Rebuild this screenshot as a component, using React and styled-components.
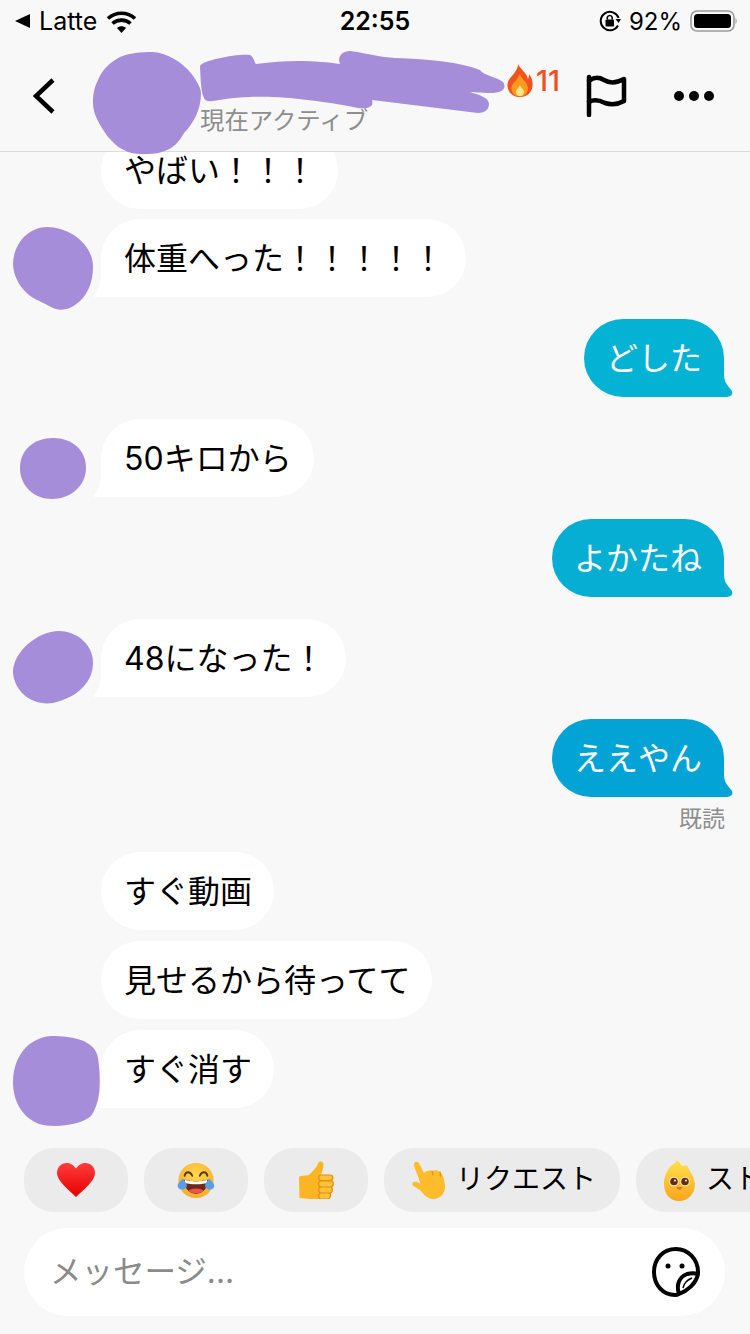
import styled, { createGlobalStyle } from "styled-components";

const Global = createGlobalStyle`
    html, body {
        margin: 0;
        padding: 0;
        background: #f8f8f8;
    }
    * {
        box-sizing: border-box;
    }
`

const JP = `Inter, "Noto Sans CJK JP", sans-serif`;
const PURPLE = "#a58dd9";

const Screen = styled.div`
    width: 750px;
    height: 1334px;
    display: flex;
    flex-direction: column;
    overflow: hidden;
    background: #f8f8f8;
    font-family: ${JP};
    color: #000;
`

const StatusBar = styled.div`
    height: 44px;
    flex: none;
    display: grid;
    grid-template-columns: 1fr auto 1fr;
    align-items: center;
    padding: 0 13px 2px 13px;
    font-size: 25px;
`

const StatusLeft = styled.div`
    display: flex;
    align-items: center;
    gap: 9px;
    padding-left: 2px;
`

const StatusRight = styled.div`
    display: flex;
    align-items: center;
    justify-content: flex-end;
    gap: 8px;
    font-size: 24px;
`

const Time = styled.div`
    font-weight: 600;
`

const Header = styled.header`
    height: 108px;
    flex: none;
    display: flex;
    align-items: center;
    padding: 0 33px 4px 33px;
    border-bottom: 1px solid #dcdcdc;
    position: relative;
    z-index: 2;
`

const AvatarSlot = styled.div`
    width: 144px;
    height: 100%;
    flex: none;
    position: relative;
`

const TitleBlock = styled.div`
    width: 302px;
    align-self: stretch;
    flex: none;
    position: relative;
    display: flex;
    align-items: flex-end;
`

const Subtitle = styled.div`
    font-size: 24.4px;
    line-height: 30px;
    color: #8e8e8e;
    margin-bottom: 12px;
`

const Streak = styled.div`
    display: flex;
    align-items: center;
    gap: 3px;
    margin: -30px auto 0 5px;
    color: #f2501e;
    font-size: 29px;
    font-weight: 500;
`

const Scribble = styled.svg`
    position: absolute;
    left: ${({ $left }) => $left}px;
    top: ${({ $top }) => $top}px;
    z-index: 1;
`

const Chat = styled.main`
    flex: 1;
    min-height: 0;
    overflow: hidden;
    display: flex;
    flex-direction: column;
`

const Row = styled.div`
    display: flex;
    justify-content: ${({ $out }) => ($out ? "flex-end" : "flex-start")};
    position: relative;
    margin-top: ${({ $gap }) => $gap}px;
    padding: ${({ $out }) => ($out ? "0 26px 0 0" : "0 0 0 101px")};
`

const Bubble = styled.div`
    position: relative;
    isolation: isolate;
    height: 78px;
    padding: ${({ $bg }) => ($bg ? "0 22px 5px" : "0 22px 5px 23px")};
    display: flex;
    align-items: center;
    border-radius: 39px;
    font-size: 32px;
    white-space: nowrap;
    background: ${({ $bg }) => $bg || "#fff"};
    color: ${({ $bg }) => ($bg ? "#fff" : "#000")};

    ${({ $tail }) => $tail && `
    &::before {
        content: "";
        position: absolute;
        z-index: -1;
        left: -8px;
        bottom: 0;
        width: 47px;
        height: 39px;
        background: #fff;
        clip-path: path("M8 0 L8 16 C8 24 6 32 1 36.5 Q0 39 3 39 L47 39 L47 0 Z");
    }
    `}

    ${({ $bg }) => $bg && `
    &::after {
        content: "";
        position: absolute;
        z-index: -1;
        right: -9px;
        bottom: 0;
        width: 48px;
        height: 39px;
        background: ${$bg};
        clip-path: path("M39 0 L39 15 C39 21 40 24 43 28 L47 33 Q49 38 42 39 L0 39 L0 0 Z");
    }
    `}
`

const Seen = styled.div`
    align-self: flex-end;
    margin: 8px 25px 0 0;
    font-size: 23px;
    line-height: 28px;
    color: #8e8e8e;
`

const Chips = styled.div`
    display: flex;
    flex: none;
    gap: 16px;
    padding-left: 24px;
    overflow: hidden;
`

const Chip = styled.div`
    flex: none;
    height: 64px;
    min-width: 104px;
    display: flex;
    align-items: center;
    justify-content: center;
    gap: 10px;
    padding: ${({ $label }) => ($label ? "0 24px 0 28px" : "0")};
    background: #ebebeb;
    border-radius: 30px;
    font-size: 28px;
    white-space: nowrap;
`

const ChipText = styled.span`
    margin-top: -7px;
`

const InputBar = styled.div`
    flex: none;
    height: 88px;
    margin: 16px 25px 18px 24px;
    display: flex;
    align-items: center;
    justify-content: space-between;
    padding: 0 25px 0 26px;
    background: #fff;
    border-radius: 44px;
`

const Placeholder = styled.div`
    font-size: 31.5px;
    color: #8a8a8a;
    margin-top: -6px;
`

const Blob = ({ d, left, top, w, h }) => (
    <Scribble $left={left} $top={top} width={w} height={h} viewBox={`0 0 ${w} ${h}`}>
        <path d={d} fill={PURPLE} />
    </Scribble>
);

const Wifi = () => (
    <svg width="31" height="23" viewBox="0 0 31 23">
        <path d="M15.5 23 L11 18 C13.5 15.8 17.5 15.8 20 18 Z" fill="#000" />
        <path d="M6.5 13.5 C11.5 9 19.5 9 24.5 13.5" fill="none" stroke="#000" strokeWidth="3.6" />
        <path d="M2 8.5 C9.5 1.5 21.5 1.5 29 8.5" fill="none" stroke="#000" strokeWidth="3.6" />
    </svg>
);

const RotationLock = () => (
    <svg width="22" height="22" viewBox="0 0 22 22">
        <path d="M19 15.5 A9.2 9.2 0 1 1 19.6 8" fill="none" stroke="#000" strokeWidth="2" />
        <path d="M16.5 9 L22 9 L19.6 13 Z" fill="#000" />
        <rect x="6.5" y="9.5" width="8.5" height="7" rx="1" fill="#000" />
        <path d="M8.3 9.5 V7.5 A2.5 2.5 0 0 1 13.2 7.5 V9.5" fill="none" stroke="#000" strokeWidth="1.6" />
    </svg>
);

const Battery = () => (
    <svg width="47" height="22" viewBox="0 0 47 22">
        <rect x="1" y="1" width="43" height="20" rx="6" fill="none" stroke="#9a9a9a" strokeWidth="1.6" />
        <rect x="4" y="4" width="37" height="14" rx="3.5" fill="#000" />
        <path d="M45.5 8 C47 8.5 47 13.5 45.5 14 Z" fill="#9a9a9a" />
    </svg>
);

const Fire = () => (
    <svg width="26" height="33" viewBox="0 0 26 33">
        <path d="M11 0 C13 5 20 9 21 15 C22 13 22 11 22 10 C25 14 26 18 25.500 22 C25 28.500 20 33 13 33 C6 33 1 28.500 .5 22 C0 15 6 12 8 8 C10 5 11 3 11 0 Z" fill="#f4511e" />
        <path d="M13 10 C14 15 21 18 21 24 C21 29 17 32.500 13 32.500 C8 32.500 4.500 29 4.500 24 C4.500 19 11 16 13 10 Z" fill="#fb9a1c" />
        <path d="M13 21 C14 24 17 25.500 17 28 C17 30.500 15 32 13 32 C10.500 32 9 30.500 9 28 C9 25.500 12 24 13 21 Z" fill="#fde58a" />
    </svg>
);

const Flag = () => (
    <svg width="42" height="43" viewBox="0 0 42 43" fill="none" stroke="#000" strokeWidth="4.5" strokeLinejoin="round" strokeLinecap="round" style={{ flex: "none" }}>
        <path d="M4 3 V41" />
        <path d="M4 7 C8 3 14 3 19 6 C24 9 30 10 39 5 V27 C32 31 26 31 20 29 C14 26 9 25 4 28" />
    </svg>
);

const Heart = () => (
    <svg width="40" height="34" viewBox="0 0 40 34">
        <defs>
            <linearGradient id="heart" x1="0" y1="0" x2="0" y2="1">
                <stop offset="0" stopColor="#ff3b3b" />
                <stop offset="1" stopColor="#e60000" />
            </linearGradient>
        </defs>
        <path d="M20 34 C13 27 1 18 1 10 C1 4 5.500 0 10.500 0 C15 0 18 2.500 20 5.500 C22 2.500 25 0 29.500 0 C34.500 0 39 4 39 10 C39 18 27 27 20 34 Z" fill="url(#heart)" />
    </svg>
);

const Laugh = () => (
    <svg width="38" height="37" viewBox="0 0 40 38">
        <defs>
            <radialGradient id="face" cx=".5" cy=".35" r=".7">
                <stop offset="0" stopColor="#ffd84f" />
                <stop offset="1" stopColor="#f9a825" />
            </radialGradient>
        </defs>
        <circle cx="20" cy="19" r="18.500" fill="url(#face)" />
        <path d="M8 14 C9 9 14 9 16 14 M24 14 C26 9 31 9 32 14" fill="none" stroke="#5a3a1a" strokeWidth="2" strokeLinecap="round" />
        <path d="M7 18 C14 20.500 26 20.500 33 18 C33 27 27 33 20 33 C13 33 7 27 7 18 Z" fill="#6d2a1a" />
        <path d="M8 18.300 C14 20.500 26 20.500 32 18.300 L31.500 21.500 C25 23.500 15 23.500 8.500 21.500 Z" fill="#fff" />
        <path d="M12 30 C15 26.500 25 26.500 28 30 C25 33 15 33 12 30 Z" fill="#ef5350" />
        <path d="M6 17 C9 21 12 24 9.500 27 C7.500 29.500 2 29 .8 25.500 C0 22.500 4 20 6 17 Z" fill="#5a9de8" />
        <path d="M34 17 C31 21 28 24 30.500 27 C32.500 29.500 38 29 39.200 25.500 C40 22.500 36 20 34 17 Z" fill="#5a9de8" />
    </svg>
);

const Thumb = () => (
    <svg width="36" height="38" viewBox="0 0 36 38">
        <path d="M1 17 C1 15.500 2 15 3.500 15 L11 14 C15 10 19 6 20 2.500 C21 -.5 25.500 0 25.500 3.500 C25.500 7 24 11 23 14 L32 14 C35.500 14 36 18 34.500 19.500 C36 21 36 25 34 26 C35.500 28 35 31 33 32 C34 35 32 38 29 38 L12 38 C8 38 5 37 1.500 37 Z" fill="#fbb424" />
        <path d="M23 14 H32 C35.500 14 36 19 32 19.500 H23 C20 19.500 20 14 23 14 Z M23 20 H33 C36 20 36 25.500 33 26 H23 C20 26 20 20 23 20 Z M23 26 H32 C35 26 35 32 32 32 H23 C20 32 20 26 23 26 Z M23 32 H30 C34 32 33 38 29 38 H23 C20 38 20 32 23 32 Z" fill="#fdc13a" stroke="#e98d0f" strokeWidth="1.200" />
    </svg>
);

const Pointing = () => (
    <svg width="34" height="38" viewBox="0 0 34 38">
        <path d="M2 4 C2 0 6 0 7.500 3 L12 12 C14 10 17 9 20 10 C23 8.500 26 9 28 11 C31 13 33 20 33 26 C33 33 28 38 21 38 C16 38 12 34 9.500 30.500 C6 27 2 26 .5 24 C-.5 21 3 20 5 21 L8.500 23 C7 16 3 10 2 4 Z" fill="#fcbc2c" />
        <path d="M20 10 L21 14 M28 11 L28.500 15" fill="none" stroke="#e98d0f" strokeWidth="1.200" strokeLinecap="round" />
    </svg>
);

const Mascot = () => (
    <svg width="32" height="41" viewBox="0 0 32 41">
        <defs>
            <linearGradient id="mascot" x1="0" y1="0" x2="0" y2="1">
                <stop offset="0" stopColor="#ffe24a" />
                <stop offset="1" stopColor="#f9a51c" />
            </linearGradient>
        </defs>
        <path d="M13 0 C15 2 17 4 18 6 C20 6 22 5 23 5 C23 8 30 14 31 24 C31 34 24 41 15 41 C6 41 0 34 0 24 C0 15 4 9 7 6 C9 4 12 3 13 0 Z" fill="url(#mascot)" />
        <circle cx="10" cy="21.500" r="4.800" fill="#fff4c0" />
        <circle cx="21" cy="21.500" r="4.800" fill="#fff4c0" />
        <circle cx="10" cy="21.500" r="3.800" fill="#6b2a12" />
        <circle cx="21" cy="21.500" r="3.800" fill="#6b2a12" />
        <circle cx="11" cy="20.500" r="1" fill="#fff" />
        <circle cx="22" cy="20.500" r="1" fill="#fff" />
        <path d="M12.500 27 H18.500 C18.500 29 16.500 30 15.500 30 C14.500 30 12.500 29 12.500 27 Z" fill="#f0703a" />
    </svg>
);

const StickerFace = () => (
    <svg width="48" height="50" viewBox="0 0 48 50" fill="none" stroke="#000" strokeWidth="4" strokeLinejoin="round" style={{ flex: "none" }}>
        <path d="M27 47 C25.500 47.800 24.500 48 23 48 C11 48 2 38 2 25 C2 12 11 2 24 2 C36 2 46 12 46 25 C46 26 46 26.500 46 27 C44 37 35 44 27 47 Z" />
        <path d="M27 47 C24 38 27 30 35 27 C39 26 43 26 46 27" />
        <path d="M31 41 C32 36 35 33 40 31" strokeWidth="1.500" />
        <circle cx="16" cy="19" r="2.500" fill="#000" stroke="none" />
        <circle cx="30" cy="19" r="2.500" fill="#000" stroke="none" />
    </svg>
);

const Blue1 = "#04b2d3";
const Blue2 = "#06aed4";
const Blue3 = "#04a3d6";

const App = () => {
    return (
        <Screen>
            <Global />
            <StatusBar>
                <StatusLeft>
                    <svg width="15" height="14" viewBox="0 0 15 14"><path d="M15 0 V14 L0 7 Z" fill="#000" /></svg>
                    <span>Latte</span>
                    <Wifi />
                </StatusLeft>
                <Time>22:55</Time>
                <StatusRight>
                    <RotationLock />
                    <span>92%</span>
                    <Battery />
                </StatusRight>
            </StatusBar>

            <Header>
                <svg width="23" height="36" viewBox="0 0 23 36" style={{ flex: "none" }}>
                    <path d="M20 2 L3 18 L20 34" fill="none" stroke="#000" strokeWidth="4.5" />
                </svg>
                <AvatarSlot>
                    <Blob
                        left={37}
                        top={8}
                        w={110}
                        h={104}
                        d="M60 0 C75 1 88 10 97 20 C105 30 108 37 108 41 C108 58 100 72 91 81 C86 90 80 96 74 98 C66 102 58 102 50 102 C42 102 36 101 31 98 C24 95 20 90 15 85 C6 72 0 62 0 51 C0 42 1 36 5 28 C10 16 18 10 27 5 C36 1 48 0 60 0 Z"
                    />
                </AvatarSlot>
                <TitleBlock>
                    <Subtitle>現在アクティブ</Subtitle>
                    <Scribble $left={-2} $top={6} width="310" height="66" viewBox="198 50 310 66">
                        <path
                            d="M200 66 C202 60 240 53 250 55 C254 57 254 62 256 64 C290 59 320 61 340 64 C337 57 342 51 350 51 C370 54 380 57 395 58 C430 59 460 62 480 70 C484 76 495 76 503 82 C507 88 503 93 490 93 C482 93 472 92 470 92 C480 95 489 98 489 104 C489 110 484 113 478 113 L372 100 C374 106 370 109 358 108 C330 102 280 95 250 97 C230 97 214 102 208 101 C202 100 201 90 200 66 Z"
                            fill={PURPLE}
                        />
                    </Scribble>
                </TitleBlock>
                <Streak>
                    <Fire />
                    <span>11</span>
                </Streak>
                <Flag />
                <svg width="44" height="12" viewBox="0 0 44 12" style={{ marginLeft: 46, flex: "none" }}>
                    <circle cx="6" cy="6" r="5" fill="#000" />
                    <circle cx="21" cy="6" r="5" fill="#000" />
                    <circle cx="36" cy="6" r="5" fill="#000" />
                </svg>
            </Header>

            <Chat>
                <Row $gap={-21}>
                    <Bubble>やばい！！！</Bubble>
                </Row>
                <Row $gap={10}>
                    <Blob
                        left={13}
                        top={8}
                        w={81}
                        h={84}
                        d="M34 0 C55 0 80 16 80 40 C80 56 74 70 62 78 C54 84 44 84 36 79 C28 74 18 72 10 62 C3 54 0 44 0 36 C1 16 16 0 34 0 Z"
                    />
                    <Bubble $tail>体重へった！！！！！</Bubble>
                </Row>
                <Row $out $gap={22}>
                    <Bubble $bg={Blue1}>どした</Bubble>
                </Row>
                <Row $gap={22}>
                    <Blob
                        left={20}
                        top={19}
                        w={66}
                        h={61}
                        d="M33 0 C52 0 66 12 66 30 C66 48 50 61 32 61 C14 61 0 48 0 30 C0 12 14 0 33 0 Z"
                    />
                    <Bubble $tail>50キロから</Bubble>
                </Row>
                <Row $out $gap={22}>
                    <Bubble $bg={Blue2}>よかたね</Bubble>
                </Row>
                <Row $gap={22}>
                    <Blob
                        left={13}
                        top={12}
                        w={81}
                        h={74}
                        d="M46 0 C62 0 80 12 80 32 C80 50 66 66 40 72 C20 75 2 62 0 42 C-1 22 24 0 46 0 Z"
                    />
                    <Bubble $tail>48になった！</Bubble>
                </Row>
                <Row $out $gap={22}>
                    <Bubble $bg={Blue3}>ええやん</Bubble>
                </Row>
                <Seen>既読</Seen>
                <Row $gap={19}>
                    <Bubble>すぐ動画</Bubble>
                </Row>
                <Row $gap={11}>
                    <Bubble>見せるから待ってて</Bubble>
                </Row>
                <Row $gap={11}>
                    <Bubble $tail>すぐ消す</Bubble>
                    <Blob
                        left={13}
                        top={6}
                        w={87}
                        h={90}
                        d="M38 0 C60 0 82 4 85 22 C88 44 88 66 78 80 C66 90 40 92 26 88 C10 82 0 66 0 46 C0 22 14 2 38 0 Z"
                    />
                </Row>
            </Chat>

            <Chips>
                <Chip><Heart /></Chip>
                <Chip><Laugh /></Chip>
                <Chip><Thumb /></Chip>
                <Chip $label><Pointing /><ChipText>リクエスト</ChipText></Chip>
                <Chip $label><Mascot /><ChipText>ストリーク</ChipText></Chip>
            </Chips>

            <InputBar>
                <Placeholder>メッセージ...</Placeholder>
                <StickerFace />
            </InputBar>
        </Screen>
    );
}

export default App;
